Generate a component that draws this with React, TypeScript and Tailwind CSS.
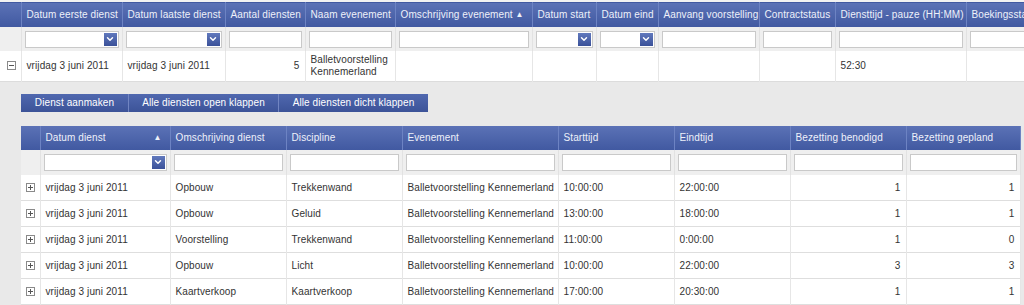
import { ChevronDown } from "lucide-react";

const font = { fontFamily: '"Liberation Sans", Tahoma, sans-serif' };

const topCols = [21, 101, 103, 80, 90, 137, 64, 62, 101, 76, 131, 110];
const topHeads = [
  "",
  "Datum eerste dienst",
  "Datum laatste dienst",
  "Aantal diensten",
  "Naam evenement",
  "Omschrijving evenement",
  "Datum start",
  "Datum eind",
  "Aanvang voorstelling",
  "Contractstatus",
  "Diensttijd - pauze (HH:MM)",
  "Boekingsstatus",
];
const topSelect = [1, 2, 6, 7];

const innerCols = [19, 130, 116, 116, 156, 116, 116, 116, 114];
const innerHeads = [
  "",
  "Datum dienst",
  "Omschrijving dienst",
  "Discipline",
  "Evenement",
  "Starttijd",
  "Eindtijd",
  "Bezetting benodigd",
  "Bezetting gepland",
];

const rows = [
  ["Opbouw", "Trekkenwand", "10:00:00", "22:00:00", 1, 1],
  ["Opbouw", "Geluid", "13:00:00", "18:00:00", 1, 1],
  ["Voorstelling", "Trekkenwand", "11:00:00", "0:00:00", 1, 0],
  ["Opbouw", "Licht", "10:00:00", "22:00:00", 3, 3],
  ["Kaartverkoop", "Kaartverkoop", "17:00:00", "20:30:00", 1, 1],
];

const BoxIcon = ({ minus }: { minus?: boolean }) => (
  <svg width="9" height="9" viewBox="0 0 9 9" className="block">
    <rect x="0.5" y="0.5" width="8" height="8" fill="white" stroke="#8a8a8a" />
    <line x1="2" y1="4.5" x2="7" y2="4.5" stroke="#555" />
    {!minus && <line x1="4.5" y1="2" x2="4.5" y2="7" stroke="#555" />}
  </svg>
);

const FilterInput = ({ select }: { select?: boolean }) => (
  <div className="relative h-[17px] bg-white border border-[#c9c9c9]">
    {select && (
      <span className="absolute right-[1px] top-[1px] w-[13px] h-[13px] bg-gradient-to-b from-[#6179bd] to-[#3b5199] flex items-center justify-center">
        <ChevronDown size={10} strokeWidth={3.5} color="white" />
      </span>
    )}
  </div>
);

const Th = ({ children, sort }: { children?: string; sort?: boolean }) => (
  <th className="font-normal text-left px-[5px] border-r border-[#6d83c3] whitespace-nowrap overflow-hidden">
    <div className="flex items-center justify-between">
      <span>{children}</span>
      {sort && <span className="text-[8px] mr-[3px]">▲</span>}
    </div>
  </th>
);

const td = "px-[5px] border-r border-[#e6e6e6] whitespace-nowrap overflow-hidden";

export default function App() {
  return (
    <div className="w-[1024px] h-[305px] overflow-hidden bg-[#e9e9e9] text-[10px] text-[#333] tracking-[0.1px]" style={font}>
      <table className="table-fixed border-collapse" style={{ width: topCols.reduce((a, b) => a + b, 0) }}>
        <colgroup>
          {topCols.map((w, i) => (
            <col key={i} style={{ width: w }} />
          ))}
        </colgroup>
        <thead>
          <tr className="h-[26px] bg-gradient-to-b from-[#5b72b6] to-[#4159a1] text-[#eef1fa] border-t-2 border-[#f2f2f2]">
            {topHeads.map((h, i) => (
              <Th key={i} sort={i === 5}>
                {h}
              </Th>
            ))}
          </tr>
          <tr className="h-[24px] bg-[#efefef]">
            {topCols.map((_, i) => (
              <td key={i} className="px-[3px] border-r border-[#e2e2e2]">
                {i > 0 && <FilterInput select={topSelect.includes(i)} />}
              </td>
            ))}
          </tr>
        </thead>
        <tbody>
          <tr className="h-[30px] bg-white border-b border-[#dcdcdc]">
            <td className="pl-[7px] border-r border-[#e6e6e6]">
              <BoxIcon minus />
            </td>
            <td className={td}>vrijdag 3 juni 2011</td>
            <td className={td}>vrijdag 3 juni 2011</td>
            <td className={`${td} text-right`}>5</td>
            <td className="px-[5px] leading-[12px] border-r border-[#e6e6e6]">Balletvoorstelling Kennemerland</td>
            <td className={td}></td>
            <td className={td}></td>
            <td className={td}></td>
            <td className={td}></td>
            <td className={td}></td>
            <td className={td}>52:30</td>
            <td></td>
          </tr>
        </tbody>
      </table>

      <div className="pl-[21px] pt-[12px]">
        <div className="flex h-[18px] text-white bg-gradient-to-b from-[#5068af] to-[#3c5398] w-[407px] whitespace-nowrap">
          <button className="w-[108px] border-r border-[#7185c2] leading-[18px]">Dienst aanmaken</button>
          <button className="w-[150px] border-r border-[#7185c2] leading-[18px]">Alle diensten open klappen</button>
          <button className="w-[149px] leading-[18px]">Alle diensten dicht klappen</button>
        </div>

        <table className="table-fixed border-collapse mt-[14px] w-[999px]">
          <colgroup>
            {innerCols.map((w, i) => (
              <col key={i} style={{ width: w }} />
            ))}
          </colgroup>
          <thead>
            <tr className="h-[24px] bg-gradient-to-b from-[#5b72b6] to-[#4159a1] text-[#eef1fa]">
              {innerHeads.map((h, i) => (
                <Th key={i} sort={i === 1}>
                  {h}
                </Th>
              ))}
            </tr>
            <tr className="h-[25px] bg-[#efefef]">
              {innerCols.map((_, i) => (
                <td key={i} className="px-[3px] border-r border-[#e2e2e2]">
                  {i > 0 && <FilterInput select={i === 1} />}
                </td>
              ))}
            </tr>
          </thead>
          <tbody>
            {rows.map((r, i) => (
              <tr key={i} className="h-[26px] bg-white border-b border-[#dedede]">
                <td className="pl-[5px] border-r border-[#e6e6e6]">
                  <BoxIcon />
                </td>
                <td className={td}>vrijdag 3 juni 2011</td>
                <td className={td}>{r[0]}</td>
                <td className={td}>{r[1]}</td>
                <td className={td}>Balletvoorstelling Kennemerland</td>
                <td className={td}>{r[2]}</td>
                <td className={td}>{r[3]}</td>
                <td className={`${td} text-right`}>{r[4]}</td>
                <td className={`${td} text-right`}>{r[5]}</td>
              </tr>
            ))}
          </tbody>
        </table>
      </div>
    </div>
  );
}
